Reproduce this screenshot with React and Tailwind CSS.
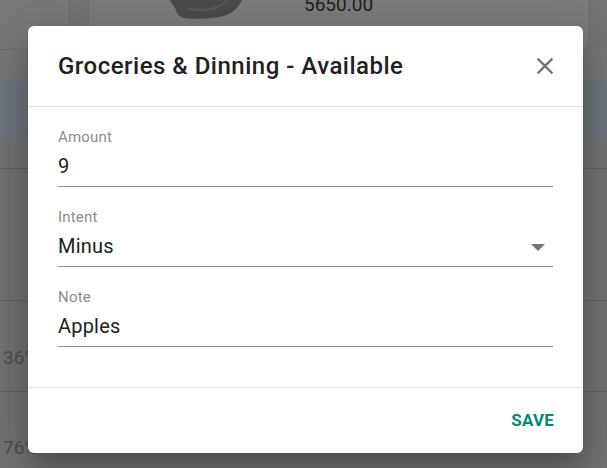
import React from 'react';

const Field = ({ label, value, select }) => (
  <div className="mb-[20px]">
    <div className="text-[15px] leading-[20px] tracking-[0.2px] text-[#8c8c8c]">{label}</div>
    <div className="mt-[5px] flex items-center justify-between border-b border-[#949494] pb-[6px]">
      <span className="text-[20px] leading-[28px] tracking-[0.2px] text-[#212121]">{value}</span>
      {select && (
        <svg width="14" height="8" viewBox="0 0 14 8" className="mr-[8px] mt-[4px]">
          <path d="M0 0h14L7 7z" fill="#757575" />
        </svg>
      )}
    </div>
  </div>
);

export default function App() {
  return (
    <div className="relative w-[607px] h-[468px] overflow-hidden bg-[#eeeeee] font-['Roboto',sans-serif]">
      {/* page behind the dialog */}
      <div className="flex h-[50px] bg-[#e8e8e8]">
        <div className="w-[70px] border-r border-b border-[#d4d4d4] bg-[#f0f0f0]" />
        <div className="ml-[19px] w-[499px] rounded-b-md bg-[#f6f6f6] relative shadow">
          <div className="flex items-start">
            <svg width="72" height="20" viewBox="0 0 72 20" className="ml-[81px]">
              <path d="M0 0h72c-4 10-14 17-30 18c-10 1-22 1-28 0c-4-1-8-4-8-8z" fill="#949494" />
              <path d="M18 8c12 4 30 2 40-8" stroke="#b4b4b4" strokeWidth="2" fill="none" />
            </svg>
            <span className="ml-[62px] -mt-[7px] text-[19px] leading-[24px] text-[#444444]">5650.00</span>
          </div>
        </div>
      </div>
      <div className="h-[30px]" />
      <div className="h-[60px] bg-[#dbecf7]" />
      <div className="h-[29px] border-b border-[#c4c4c4] bg-[#e6e6e6]" />
      <div className="h-[132px] border-b border-[#c4c4c4] bg-[#e6e6e6]" />
      <div className="h-[91px] border-b border-[#c4c4c4] bg-[#e6e6e6] pl-[3px] pt-[45px] text-[19px] leading-[24px] text-[#9c9c9c]">36%</div>
      <div className="h-[77px] bg-[#e6e6e6] pl-[3px] pt-[44px] text-[19px] leading-[24px] text-[#9c9c9c]">76%</div>

      {/* overlay + dialog */}
      <div className="absolute inset-0 bg-black/50 pl-[28px] pt-[26px]">
        <div className="w-[555px] rounded-md bg-white shadow-[0_11px_15px_-7px_rgba(0,0,0,0.2),0_24px_38px_3px_rgba(0,0,0,0.14),0_9px_46px_8px_rgba(0,0,0,0.12)]">
          <div className="flex h-[81px] items-center justify-between border-b border-[#e0e0e0] pl-[30px] pr-[24px]">
            <h2 className="text-[24px] font-medium leading-[28px] tracking-[0.5px] text-[#212121]">Groceries &amp; Dinning - Available</h2>
            <svg width="28" height="28" viewBox="0 0 24 24">
              <path fill="#757575" d="M19 6.41L17.59 5 12 10.59 6.41 5 5 6.41 10.59 12 5 17.59 6.41 19 12 13.41 17.59 19 19 17.59 13.41 12z" />
            </svg>
          </div>
          <div className="border-b border-[#e0e0e0] px-[30px] pt-[20px] pb-[20px]">
            <Field label="Amount" value="9" />
            <Field label="Intent" value="Minus" select />
            <Field label="Note" value="Apples" />
          </div>
          <div className="flex h-[65px] items-center justify-end pr-[29px]">
            <button className="text-[17px] font-bold tracking-[0.2px] text-[#00897b]">SAVE</button>
          </div>
        </div>
      </div>
    </div>
  );
}
